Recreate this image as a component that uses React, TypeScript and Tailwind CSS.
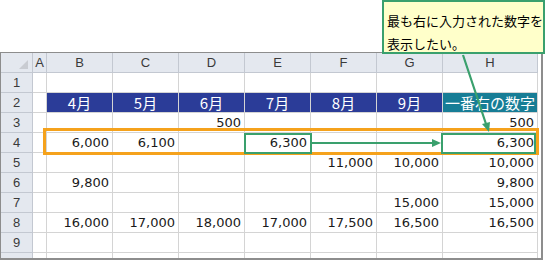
const cols = ['A', 'B', 'C', 'D', 'E', 'F', 'G', 'H'];
const colW = ['w-[14px]', 'w-[66px]', 'w-[66px]', 'w-[66px]', 'w-[66px]', 'w-[66px]', 'w-[66px]', 'w-[95px]'];

// values for columns A..H, per row
const rows: (string | null)[][] = [
  [null, null, null, null, null, null, null, null],
  [null, null, null, null, null, null, null, null],
  [null, null, null, '500', null, null, null, '500'],
  [null, '6,000', '6,100', null, '6,300', null, null, '6,300'],
  [null, null, null, null, null, '11,000', '10,000', '10,000'],
  [null, '9,800', null, null, null, null, null, '9,800'],
  [null, null, null, null, null, null, '15,000', '15,000'],
  [null, '16,000', '17,000', '18,000', '17,000', '17,500', '16,500', '16,500'],
  [null, null, null, null, null, null, null, null],
];

const months = ['4月', '5月', '6月', '7月', '8月', '9月'];

const numFont = { fontFamily: '"DejaVu Sans", Verdana, sans-serif' };
const jpFont = { fontFamily: '"Noto Sans CJK JP", "Noto Sans", sans-serif' };
const hdrFont = { fontFamily: '"Liberation Sans", Arial, sans-serif' };

function RowHead({ label, h = 'h-[20px]' }: { label: string; h?: string }) {
  return (
    <div
      className={`w-[32px] ${h} shrink-0 bg-[#e4e8ef] border-r border-b border-[#c3c8d1] flex items-center justify-center text-[13px] text-[#3a3a3a]`}
      style={hdrFont}
    >
      {label}
    </div>
  );
}

export default function App() {
  return (
    <div className="relative w-[556px] h-[260px] bg-white overflow-hidden">
      <div className="pt-[52px]">
        <div className="w-[543px] h-[208px] border-t border-l border-r-2 border-b-2 border-[#8d8d8d] bg-white overflow-hidden">
          {/* column letters */}
          <div className="flex">
            <div className="w-[32px] h-[20px] shrink-0 bg-[#e4e8ef] border-r border-b border-[#c3c8d1] flex items-end justify-end pr-[4px] pb-[3px]">
              <div className="w-0 h-0 border-l-[9px] border-l-transparent border-b-[9px] border-b-[#c9ccd2]" />
            </div>
            {cols.map((c, i) => (
              <div
                key={c}
                className={`${colW[i]} h-[20px] shrink-0 bg-[#e4e8ef] border-r border-b border-[#c3c8d1] flex items-center justify-center text-[13px] text-[#3a3a3a]`}
                style={hdrFont}
              >
                {c}
              </div>
            ))}
          </div>

          {rows.map((r, ri) => (
            <div key={ri} className="flex">
              <RowHead label={String(ri + 1)} />
              {ri === 1
                ? cols.map((c, ci) => {
                    if (ci === 0)
                      return <div key={c} className={`${colW[ci]} h-[20px] shrink-0 border-r border-b border-[#d4d4d4]`} />;
                    const isLast = ci === 7;
                    return (
                      <div
                        key={c}
                        className={`${colW[ci]} h-[20px] shrink-0 border-r border-b border-[#d4d4d4] ${
                          isLast ? 'bg-[#177d96]' : 'bg-[#2b3c98]'
                        } flex items-center justify-center text-white text-[15px] leading-[19px]`}
                        style={jpFont}
                      >
                        {isLast ? '一番右の数字' : months[ci - 1]}
                      </div>
                    );
                  })
                : r.map((v, ci) => (
                    <div
                      key={ci}
                      className={`${colW[ci]} h-[20px] shrink-0 border-r border-b border-[#d4d4d4] flex items-center justify-end pr-[3px] text-[13px] text-[#1a1a1a]`}
                      style={numFont}
                    >
                      {v}
                    </div>
                  ))}
            </div>
          ))}

          <div className="flex">
            <RowHead label="" h="h-[6px]" />
            {cols.map((c, ci) => (
              <div key={c} className={`${colW[ci]} h-[6px] shrink-0 border-r border-[#d4d4d4]`} />
            ))}
          </div>
        </div>
      </div>

      {/* highlight for row 4 */}
      <div className="absolute left-[43px] top-[128px] w-[496px] h-[27px] border-[3px] border-[#f5a21c]" />
      <div className="absolute left-[244px] top-[133px] w-[68px] h-[21px] border-2 border-[#3aa06d]" />
      <div className="absolute left-[441px] top-[133px] w-[95px] h-[21px] border-2 border-[#3aa06d]" />

      {/* callout */}
      <div
        className="absolute left-[382px] top-0 w-[163px] h-[54px] border-2 border-[#3aa06d] bg-[#ffffca] pl-[3px] pt-[7px] text-[13px] leading-[23px] text-black whitespace-nowrap"
        style={jpFont}
      >
        <div>最も右に入力された数字を</div>
        <div>表示したい。</div>
      </div>

      <svg className="absolute inset-0 pointer-events-none" width="556" height="260" viewBox="0 0 556 260">
        <line x1="312" y1="143" x2="433" y2="143" stroke="#3aa06d" strokeWidth="2" />
        <polygon points="441,143 432,139 432,147" fill="#3aa06d" />
        <line x1="463" y1="55" x2="486" y2="124" stroke="#3aa06d" strokeWidth="2.2" />
        <polygon points="489,132 482,124 490,122" fill="#3aa06d" />
      </svg>
    </div>
  );
}
